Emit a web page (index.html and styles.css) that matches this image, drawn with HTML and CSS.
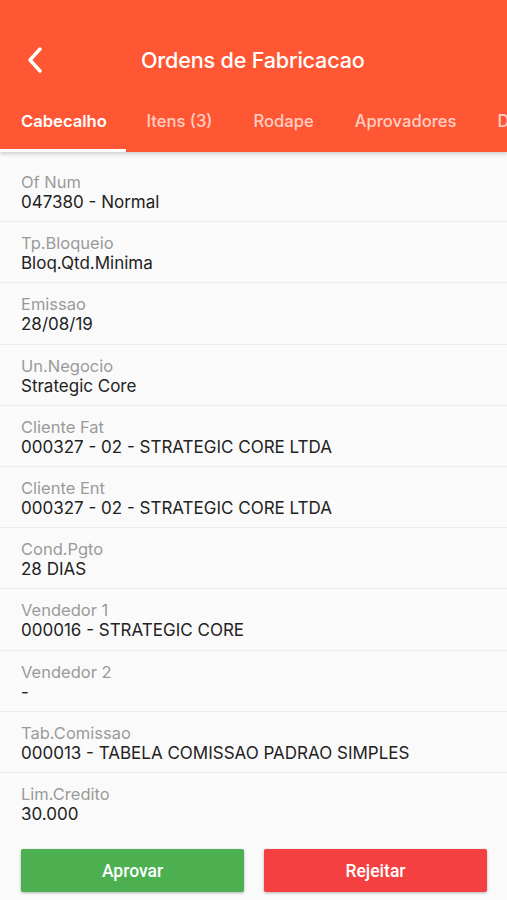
FILE: index.html
```html
<!DOCTYPE html>
<html>
<head>
<meta charset="utf-8">
<link rel="stylesheet" href="styles.css">
</head>
<body>
<div class="screen">
  <header class="appbar">
    <div class="toolbar">
      <button class="back" aria-label="Voltar">
        <svg width="20" height="28" viewBox="0 0 20 28"><path d="M15 3 L5 14 L15 25" fill="none" stroke="#fff" stroke-width="3.4" stroke-linecap="round" stroke-linejoin="round"/></svg>
      </button>
      <h1 class="title">Ordens de Fabricacao</h1>
    </div>
    <nav class="tabs">
      <div class="tab active">Cabecalho</div>
      <div class="tab">Itens (3)</div>
      <div class="tab">Rodape</div>
      <div class="tab">Aprovadores</div>
      <div class="tab">Documentos</div>
    </nav>
  </header>
  <main class="list">
    <div class="row"><div class="label">Of Num</div><div class="value">047380 - Normal</div></div>
    <div class="row"><div class="label">Tp.Bloqueio</div><div class="value">Bloq.Qtd.Minima</div></div>
    <div class="row"><div class="label">Emissao</div><div class="value">28/08/19</div></div>
    <div class="row"><div class="label">Un.Negocio</div><div class="value">Strategic Core</div></div>
    <div class="row"><div class="label">Cliente Fat</div><div class="value">000327 - 02 - STRATEGIC CORE LTDA</div></div>
    <div class="row"><div class="label">Cliente Ent</div><div class="value">000327 - 02 - STRATEGIC CORE LTDA</div></div>
    <div class="row"><div class="label">Cond.Pgto</div><div class="value">28 DIAS</div></div>
    <div class="row"><div class="label">Vendedor 1</div><div class="value">000016 - STRATEGIC CORE</div></div>
    <div class="row"><div class="label">Vendedor 2</div><div class="value">-</div></div>
    <div class="row"><div class="label">Tab.Comissao</div><div class="value">000013 - TABELA COMISSAO PADRAO SIMPLES</div></div>
    <div class="row last"><div class="label">Lim.Credito</div><div class="value">30.000</div></div>
  </main>
  <footer class="actions">
    <button class="btn approve">Aprovar</button>
    <button class="btn reject">Rejeitar</button>
  </footer>
</div>
</body>
</html>
```
FILE: styles.css
```css
* { box-sizing: border-box; }
html, body { margin: 0; padding: 0; }
body {
  width: 507px;
  height: 900px;
  overflow: hidden;
  background: #fafafa;
  font-family: "Inter", "Liberation Sans", sans-serif;
}
.screen {
  display: flex;
  flex-direction: column;
  height: 900px;
}
.appbar {
  background: #ff5733;
  height: 152px;
  box-shadow: 0 2px 4px rgba(0,0,0,0.18);
  position: relative;
  z-index: 1;
  display: flex;
  flex-direction: column;
  overflow: hidden;
}
.toolbar {
  height: 90px;
  padding-top: 30px;
  display: flex;
  align-items: center;
}
.back {
  background: none;
  border: 0;
  padding: 0;
  margin-left: 25px;
  width: 20px;
  height: 28px;
  display: flex;
}
.title {
  margin: 0 0 0 96px;
  color: #fff;
  font-size: 21.6px;
  font-weight: 500;
  letter-spacing: -0.2px;
}
.tabs {
  display: flex;
  height: 62px;
  white-space: nowrap;
}
.tab {
  flex: none;
  padding: 3px 20.5px 0;
  display: flex;
  align-items: center;
  color: rgba(255,255,255,0.72);
  font-size: 16.6px;
  font-weight: 500;
  border-bottom: 3px solid transparent;
}
.tab.active {
  color: #fff;
  font-weight: 600;
  border-bottom-color: #fff;
  width: 126px;
  padding-left: 21px;
  padding-right: 0;
}
.list {
  flex: 1;
  padding-top: 9px;
}
.row {
  height: 61.2px;
  padding: 11px 21px 0;
  border-bottom: 1px solid #ececec;
}
.row.last { border-bottom: 0; }
.label {
  color: #9a9a9a;
  font-size: 16.5px;
  line-height: 20px;
}
.value {
  color: #222;
  font-size: 17px;
  line-height: 21px;
}
.actions {
  display: flex;
  gap: 20px;
  padding: 0 20px 8px 21px;
}
.btn {
  flex: 1;
  height: 43px;
  border: 0;
  border-radius: 2px;
  color: #fff;
  font-family: "Roboto", "Liberation Sans", sans-serif;
  font-size: 17.5px;
  font-weight: 500;
  box-shadow: 0 1px 3px rgba(0,0,0,0.3);
}
.approve { background: #4caf50; }
.reject { background: #f44040; }
```
